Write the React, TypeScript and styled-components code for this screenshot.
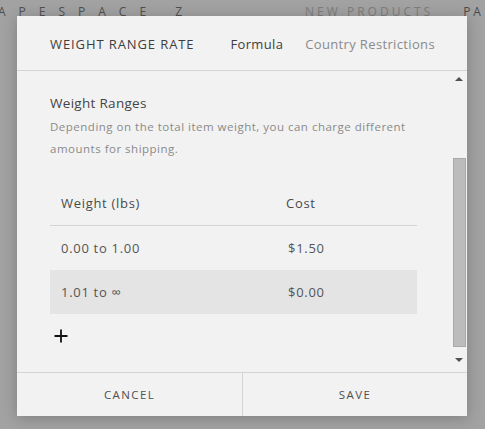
import React from 'react'
import styled, { createGlobalStyle } from 'styled-components'

const Global = createGlobalStyle`
  html, body { margin: 0; padding: 0; }
  body {
    width: 485px;
    height: 429px;
    overflow: hidden;
    background: #a2a2a2;
    font-family: "Open Sans", "Liberation Sans", sans-serif;
  }
`

const Page = styled.div`
  position: relative;
  width: 485px;
  height: 429px;
  overflow: hidden;
`

const SiteBar = styled.div`
  display: flex;
  align-items: center;
  height: 20px;
  margin-top: 1px;
  color: #505050;
  font-size: 12px;
`

const Logo = styled.span`
  letter-spacing: 13px;
  margin-left: -2px;
`

const NavLink = styled.span<{ $dark?: boolean }>`
  letter-spacing: 3px;
  color: ${p => (p.$dark ? '#4a4a4a' : '#7d7d7d')};
  margin-left: ${p => (p.$dark ? '30px' : '110px')};
  white-space: nowrap;
`

const Modal = styled.div`
  position: absolute;
  left: 17px;
  top: 16px;
  width: 450px;
  height: 400px;
  background: #f2f2f2;
  box-shadow: 0 2px 14px rgba(0, 0, 0, 0.22);
  display: flex;
  flex-direction: column;
`

const Header = styled.div`
  display: flex;
  align-items: center;
  height: 55px;
  padding-left: 33px;
  border-bottom: 1px solid #d4d4d4;
  box-sizing: border-box;
  padding-top: 2px;
`

const Tab = styled.span<{ $active?: boolean; $upper?: boolean }>`
  font-size: 13px;
  color: ${p => (p.$active ? '#3e3e3e' : '#8a8a8a')};
  letter-spacing: ${p => (p.$upper ? '0.9px' : '0.35px')};
  margin-right: ${p => (p.$upper ? '36px' : '22px')};
  white-space: nowrap;
`

const Body = styled.div`
  flex: 1;
  display: flex;
  min-height: 0;
`

const Content = styled.div`
  flex: 1;
  padding: 23px 0 0 33px;
`

const Title = styled.div`
  font-size: 13.5px;
  color: #444;
  line-height: 18px;
  letter-spacing: 0.3px;
`

const Desc = styled.div`
  font-size: 11.5px;
  color: #8a8a8a;
  line-height: 22px;
  margin-top: 4px;
  width: 380px;
  letter-spacing: 0.5px;
`

const Table = styled.div`
  width: 367px;
  margin-top: 20px;
`

const Row = styled.div<{ $head?: boolean; $shade?: boolean }>`
  display: grid;
  grid-template-columns: ${p => (p.$head ? '225px 1fr' : '227px 1fr')};
  align-items: center;
  height: ${p => (p.$head ? '46px' : '44px')};
  padding-left: 11px;
  font-size: 13px;
  color: ${p => (p.$head ? '#4a4a4a' : '#555')};
  background: ${p => (p.$shade ? '#e4e4e4' : 'transparent')};
  border-bottom: ${p => (p.$head ? '1px solid #d3d3d3' : 'none')};
  letter-spacing: 0.7px;
  box-sizing: border-box;
`

const AddButton = styled.button`
  display: block;
  margin: 14px 0 0 3px;
  padding: 0;
  width: 16px;
  height: 16px;
  border: none;
  background: none;
`

const ScrollBar = styled.div`
  width: 16px;
  display: flex;
  flex-direction: column;
  align-items: center;
`

const Arrow = styled.div<{ $down?: boolean }>`
  width: 0;
  height: 0;
  border-left: 4px solid transparent;
  border-right: 4px solid transparent;
  ${p =>
    p.$down
      ? 'border-top: 4px solid #505050; margin-top: 11px;'
      : 'border-bottom: 4px solid #505050; margin-top: 6px;'}
`

const Track = styled.div`
  flex: 0 0 auto;
  width: 13px;
  height: 189px;
  margin-top: 77px;
  background: #bcbcbc;
  border: 1px solid #a9a9a9;
  box-sizing: border-box;
`

const Footer = styled.div`
  display: grid;
  grid-template-columns: 225px 1fr;
  height: 43px;
  border-top: 1px solid #d4d4d4;
`

const FooterButton = styled.button<{ $divider?: boolean }>`
  border: none;
  border-left: ${p => (p.$divider ? '1px solid #d4d4d4' : 'none')};
  background: transparent;
  font-family: "Open Sans", "Liberation Sans", sans-serif;
  font-size: 11.5px;
  letter-spacing: 1.4px;
  color: #4f4f4f;
  text-transform: uppercase;
  padding: 0;
`

export default function App() {
  return (
    <Page>
      <Global />
      <SiteBar>
        <Logo>APESPACE Z</Logo>
        <NavLink>NEW PRODUCTS</NavLink>
        <NavLink $dark>PA</NavLink>
      </SiteBar>
      <Modal>
        <Header>
          <Tab $active $upper>WEIGHT RANGE RATE</Tab>
          <Tab $active>Formula</Tab>
          <Tab>Country Restrictions</Tab>
        </Header>
        <Body>
          <Content>
            <Title>Weight Ranges</Title>
            <Desc>
              Depending on the total item weight, you can charge different amounts for shipping.
            </Desc>
            <Table>
              <Row $head>
                <span>Weight (lbs)</span>
                <span>Cost</span>
              </Row>
              <Row>
                <span>0.00 to 1.00</span>
                <span>$1.50</span>
              </Row>
              <Row $shade>
                <span>1.01 to ∞</span>
                <span>$0.00</span>
              </Row>
            </Table>
            <AddButton aria-label="add range">
              <svg width="16" height="16" viewBox="0 0 16 16">
                <path d="M8 1.5v13M1.5 8h13" stroke="#111" strokeWidth="1.8" />
              </svg>
            </AddButton>
          </Content>
          <ScrollBar>
            <Arrow />
            <Track />
            <Arrow $down />
          </ScrollBar>
        </Body>
        <Footer>
          <FooterButton>Cancel</FooterButton>
          <FooterButton $divider>Save</FooterButton>
        </Footer>
      </Modal>
    </Page>
  )
}
